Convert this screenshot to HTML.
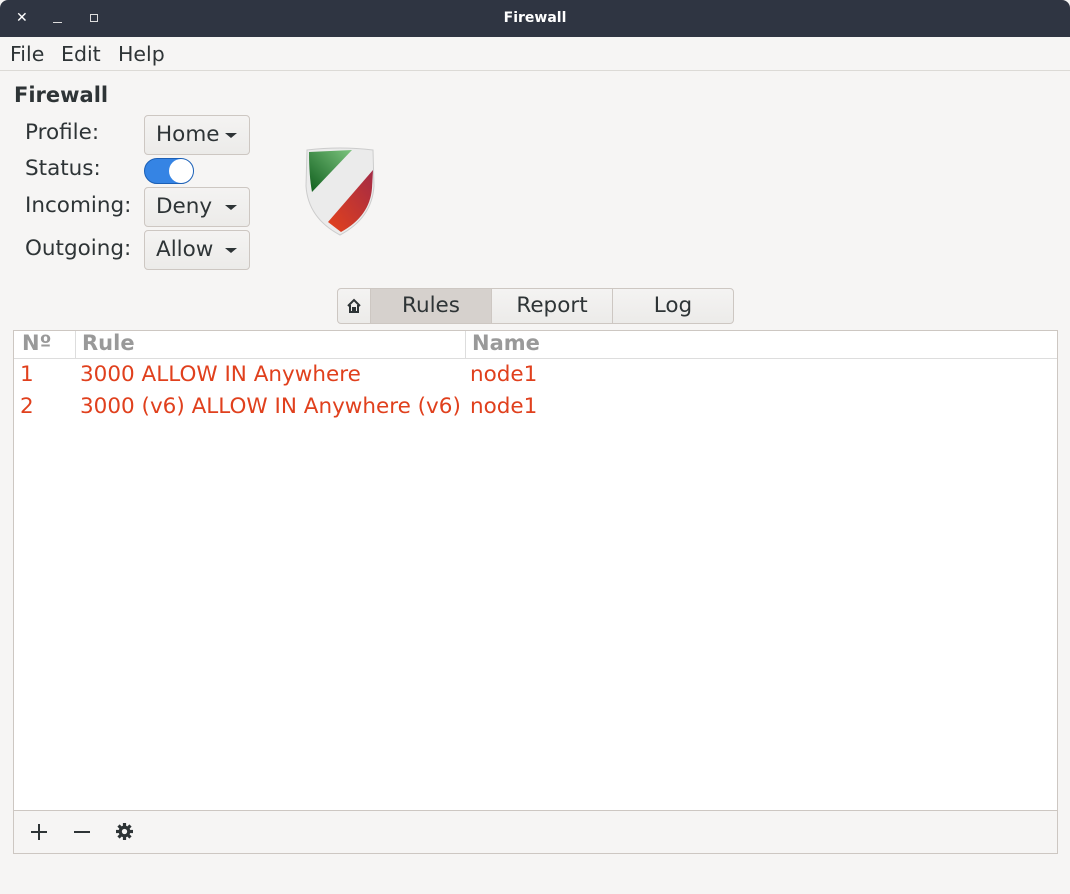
<!DOCTYPE html>
<html><head><meta charset="utf-8"><style>
*{box-sizing:border-box;margin:0;padding:0}
body{width:1070px;height:894px;background:#f6f5f4;font-family:"DejaVu Sans","Liberation Sans",sans-serif;color:#2e3436;position:relative;overflow:hidden}
.abs{position:absolute}
.title{left:0;top:0;width:1070px;height:37px;background:#2f3542;border-radius:8px 8px 0 0;color:#fff;font-weight:bold;font-size:14px;text-align:center;line-height:37px}
.menu{top:37px;left:0;width:1070px;height:34px;border-bottom:1px solid #dcdad6;font-size:20.5px}
.menu span{position:absolute;top:5px}
.lbl{font-size:21.5px;left:25px}
.btn{left:144px;width:106px;height:40px;border:1px solid #cdc7c2;border-radius:4px;background:linear-gradient(#f4f3f2,#ecebe9);font-size:21.5px;padding-left:11px;line-height:37px}
.btn:after{content:"";position:absolute;right:12px;top:17px;border-left:6px solid transparent;border-right:6px solid transparent;border-top:5px solid #2e3436}
.tab{top:288px;height:36px;border:1px solid #cdc7c2;background:linear-gradient(#f4f3f2,#ecebe9);font-size:21.5px;text-align:center;line-height:33px}
.red{color:#e0401d;font-size:21.5px}
.hd{color:#999;font-weight:bold;font-size:21px;top:331px}
</style></head><body>
<div class="abs title">Firewall
<span class="abs" style="left:16px;top:0;font-weight:normal;font-size:14px">✕</span>
<span class="abs" style="left:53px;top:22px;width:9px;height:1px;background:#ddd"></span>
<span class="abs" style="left:90px;top:14px;width:8px;height:8px;border:1px solid #ddd"></span>
</div>
<div class="abs menu"><span style="left:10px">File</span><span style="left:61px">Edit</span><span style="left:118px">Help</span></div>
<div class="abs" style="left:14px;top:83px;font-size:21px;font-weight:bold">Firewall</div>
<div class="abs lbl" style="top:120px">Profile:</div>
<div class="abs lbl" style="top:156px">Status:</div>
<div class="abs lbl" style="top:193px">Incoming:</div>
<div class="abs lbl" style="top:236px">Outgoing:</div>
<div class="abs btn" style="top:115px">Home</div>
<div class="abs btn" style="top:187px">Deny</div>
<div class="abs btn" style="top:230px">Allow</div>
<div class="abs" style="left:144px;top:158px;width:50px;height:26px;border-radius:13px;background:#3584e4;border:1px solid #1b5fb5"></div>
<div class="abs" style="left:169px;top:159px;width:24px;height:24px;border-radius:12px;background:#fff"></div>
<svg class="abs" style="left:302px;top:146px" width="76" height="92" viewBox="0 0 76 92">
<defs><linearGradient id="g" x1="0" y1="1" x2="1" y2="0"><stop offset="0" stop-color="#0f5e1d"/><stop offset="1" stop-color="#7cc47e"/></linearGradient>
<linearGradient id="r" x1="0" y1="1" x2="1" y2="0"><stop offset="0" stop-color="#e4421c"/><stop offset="1" stop-color="#a32a45"/></linearGradient></defs>
<path d="M5 4 Q38 0 71 4 L72 40 Q70 72 38 89 Q6 72 4 40 Z" fill="#ebebeb" stroke="#ccc"/>
<path d="M7 6 L50 4 L10 46 Q7 30 7 6Z" fill="url(#g)"/>
<path d="M71 24 L70 42 Q68 70 39 86 L26 76Z" fill="url(#r)"/>
</svg>
<div class="abs tab" style="left:337px;width:34px;border-radius:4px 0 0 4px"><svg width="16" height="16" viewBox="0 0 16 16" style="margin-top:9px"><path d="M2 8 L8 2 L14 8 M4 7 V14 H12 V7 M7 14 V10 H9 V14" fill="none" stroke="#2e3436" stroke-width="2"/></svg></div>
<div class="abs tab" style="left:370px;width:122px;background:#d6d1cd">Rules</div>
<div class="abs tab" style="left:491px;width:122px">Report</div>
<div class="abs tab" style="left:612px;width:122px;border-radius:0 4px 4px 0">Log</div>
<div class="abs" style="left:13px;top:330px;width:1045px;height:524px;border:1px solid #cdc7c2;background:#fff"></div>
<div class="abs" style="left:14px;top:358px;width:1043px;height:1px;background:#ddd"></div>
<div class="abs" style="left:75px;top:331px;width:1px;height:27px;background:#ddd"></div>
<div class="abs" style="left:465px;top:331px;width:1px;height:27px;background:#ddd"></div>
<div class="abs hd" style="left:22px">Nº</div>
<div class="abs hd" style="left:82px">Rule</div>
<div class="abs hd" style="left:472px">Name</div>
<div class="abs red" style="left:20px;top:362px">1</div>
<div class="abs red" style="left:80px;top:362px">3000 ALLOW IN Anywhere</div>
<div class="abs red" style="left:470px;top:362px">node1</div>
<div class="abs red" style="left:20px;top:394px">2</div>
<div class="abs red" style="left:80px;top:394px">3000 (v6) ALLOW IN Anywhere (v6)</div>
<div class="abs red" style="left:470px;top:394px">node1</div>
<div class="abs" style="left:14px;top:810px;width:1043px;height:43px;background:#f6f5f4;border-top:1px solid #cdc7c2"></div>
<div class="abs" style="left:31px;top:831px;width:16px;height:2px;background:#2e3436"></div>
<div class="abs" style="left:38px;top:824px;width:2px;height:16px;background:#2e3436"></div>
<div class="abs" style="left:74px;top:831px;width:16px;height:2px;background:#2e3436"></div>
<svg class="abs" style="left:116px;top:823px" width="17" height="17" viewBox="0 0 16 16"><g fill="#2e3436"><circle cx="8" cy="8" r="5.5"/><rect x="6.5" y="0" width="3" height="16"/><rect x="0" y="6.5" width="16" height="3"/><rect x="6.5" y="0" width="3" height="16" transform="rotate(45 8 8)"/><rect x="6.5" y="0" width="3" height="16" transform="rotate(-45 8 8)"/></g><circle cx="8" cy="8" r="2.5" fill="#f6f5f4"/></svg>
</body></html>
